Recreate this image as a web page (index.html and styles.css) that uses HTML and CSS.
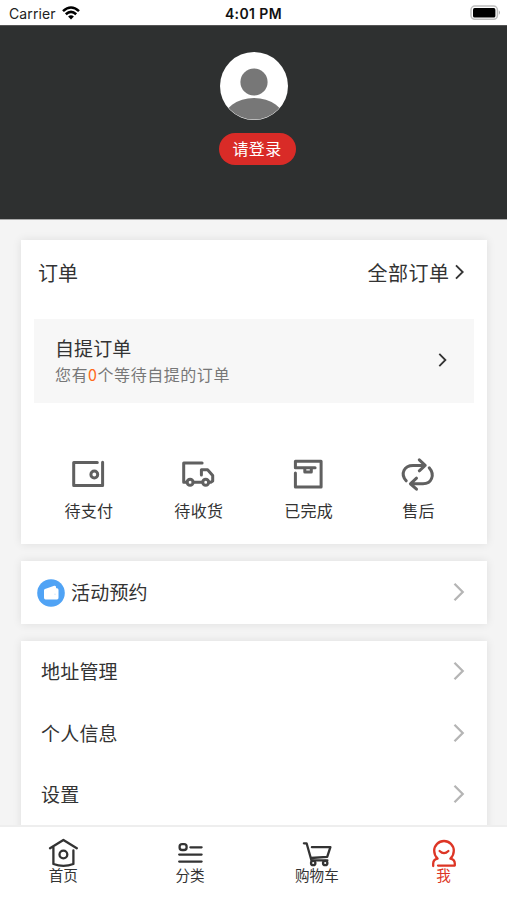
FILE: index.html
```html
<!DOCTYPE html>
<html lang="zh-CN">
<head>
<meta charset="utf-8">
<title>我的</title>
<link rel="stylesheet" href="styles.css">
</head>
<body>
<div class="app">
  <header class="status">
    <div class="carrier"><span>Carrier</span>
      <svg width="18" height="14" viewBox="0 0 18 14"><g fill="none" stroke="#000" stroke-width="2.6"><path d="M1 5.1Q9-2.1 17 5.1"/><path d="M3.8 8.2Q9 3.6 14.2 8.2"/></g><path d="M6.1 10.4Q9 8 11.9 10.4L9 13.4Z"/></svg>
    </div>
    <div class="time">4:01 PM</div>
    <div class="battery">
      <svg width="32" height="16" viewBox="0 0 32 16"><rect x="1" y="1.1" width="26.4" height="13.2" rx="3.8" fill="#fff" stroke="#bdbdbd" stroke-width="1.5"/><rect x="3" y="3.1" width="22.4" height="9.4" rx="1.6"/><path d="M28.9 5.6Q31 7.7 28.9 9.8Z" fill="#aaa"/></svg>
    </div>
  </header>

  <section class="profile">
    <svg class="avatar" width="68" height="68" viewBox="0 0 68 68"><defs><clipPath id="face"><circle cx="34" cy="34" r="33.6"/></clipPath></defs><circle cx="34" cy="34" r="34" fill="#fff"/><g fill="#777" clip-path="url(#face)"><circle cx="34" cy="30" r="13.6"/><ellipse cx="34" cy="69" rx="31" ry="23"/></g></svg>
    <button class="login">请登录</button>
  </section>

  <main class="content">
    <section class="card orders">
      <div class="orders-head">
        <h2>订单</h2>
        <div class="all"><span>全部订单</span><svg width="9" height="16" viewBox="0 0 9 16"><path d="M1 1.3L7.7 8L1 14.7" fill="none" stroke="#333" stroke-width="1.9"/></svg></div>
      </div>
      <div class="pickup">
        <div>
          <div class="pickup-title">自提订单</div>
          <div class="pickup-note">您有<b>0</b>个等待自提的订单</div>
        </div>
        <svg width="9" height="14" viewBox="0 0 9 14"><path d="M1.3 .8L7.4 7L1.3 13.2" fill="none" stroke="#333" stroke-width="1.8"/></svg>
      </div>
      <div class="states">
        <div class="state">
          <svg class="line" viewBox="0 0 40 40"><path d="M29.3 8.5H5.7V31.5H34.6V8.2"/><circle cx="26.3" cy="20.5" r="3.4"/></svg>
          <span>待支付</span>
        </div>
        <div class="state">
          <svg class="line" viewBox="0 0 40 40"><path d="M24.1 9H5.7V28.3H9M15.1 28.3H24.7M23.4 21V15.7H29.6L34.7 21.5V27L32.8 28.3H30.7"/><circle cx="12.1" cy="28.3" r="3"/><circle cx="27.7" cy="28.3" r="3"/></svg>
          <span>待收货</span>
        </div>
        <div class="state">
          <svg class="line" viewBox="0 0 40 40"><path d="M7.4 19V33H33.1V7.3H7.4V13.7H27.1M16.8 13.7V17.9H23.3V13.7"/></svg>
          <span>已完成</span>
        </div>
        <div class="state">
          <svg class="line" viewBox="0 0 40 40"><path d="M8.2 26.8C1.8 19.5 6.5 11.4 15 11.4H27M21.3 5.8L27.2 11.4L21.3 16.8M31.2 13.8C37.4 21 33.4 29.8 25 29.8H12.8M18.5 24.2L12.4 29.8L18.5 35.2"/></svg>
          <span>售后</span>
        </div>
      </div>
    </section>

    <section class="card booking">
      <svg width="28" height="28" viewBox="0 0 28 28"><circle cx="14" cy="14" r="13.8" fill="#50a3f5"/><path d="M7 11.2Q7 10.3 8 10L17.2 6.7Q18.6 6.4 18.9 7.6L19.2 9.3H20Q21.5 9.3 21.5 11V18.8Q21.5 20.4 20 20.4H8.5Q7 20.4 7 18.8Z" fill="#fff"/><circle cx="18" cy="15.3" r=".8" fill="#d4e9fd"/></svg>
      <span class="label">活动预约</span>
      <svg class="more" width="12" height="20" viewBox="0 0 12 20"><path d="M1.5 1.8L9.7 10L1.5 18.2"/></svg>
    </section>

    <section class="card menu">
      <div class="row"><span class="label">地址管理</span><svg class="more" width="12" height="20" viewBox="0 0 12 20"><path d="M1.5 1.8L9.7 10L1.5 18.2"/></svg></div>
      <div class="row"><span class="label">个人信息</span><svg class="more" width="12" height="20" viewBox="0 0 12 20"><path d="M1.5 1.8L9.7 10L1.5 18.2"/></svg></div>
      <div class="row"><span class="label">设置</span><svg class="more" width="12" height="20" viewBox="0 0 12 20"><path d="M1.5 1.8L9.7 10L1.5 18.2"/></svg></div>
    </section>
  </main>

  <nav class="tabs">
    <div class="tab">
      <svg viewBox="0 0 30 30"><path d="M2 10.2L15.4 2L28.8 10.2M5.4 9V26Q15.4 29.6 25.4 26V12.5"/><circle cx="15.4" cy="16.5" r="3.9"/></svg>
      <span>首页</span>
    </div>
    <div class="tab">
      <svg viewBox="0 0 30 30"><rect x="4.6" y="6.2" width="7" height="5.8" rx="2.6"/><path d="M15.4 9.3H26.6M4.2 16.6H26.6M4.2 23.6H26.6"/></svg>
      <span>分类</span>
    </div>
    <div class="tab">
      <svg viewBox="0 0 30 30"><path d="M1.9 5.3H4.6L9.4 22.3H25.4M9.9 9.2H28.4L25.2 18.9L8.8 20"/><circle cx="11.2" cy="25" r="2.2"/><circle cx="23.2" cy="25" r="2.2"/></svg>
      <span>购物车</span>
    </div>
    <div class="tab active">
      <svg viewBox="0 0 30 30"><path d="M4.2 28V25.5Q4.2 21.6 8.6 20.6Q5.2 17.4 5.2 12.8A9.8 9.8 0 0 1 24.8 12.8Q24.8 17.4 21.4 20.6Q25.8 21.6 25.8 25.5V27.6H9M10.6 13Q15 17.3 19.4 13"/></svg>
      <span>我</span>
    </div>
  </nav>
</div>
</body>
</html>
```
FILE: styles.css
```css
* { box-sizing: border-box; }
body { margin: 0; font-family: "Noto Sans CJK SC", sans-serif; color: #333; }
svg { display: block; flex: none; }
.app { width: 507px; height: 900px; overflow: hidden; display: flex; flex-direction: column; background: #f4f4f4; }

.status { height: 25px; flex: none; padding: 1px 6px 0 9px; background: #fff; display: grid; grid-template-columns: 1fr auto 1fr; align-items: center; font-family: Inter, sans-serif; font-size: 14px; color: #222; }
.carrier { display: flex; align-items: center; gap: 6px; letter-spacing: .1px; }
.time { margin-right: 3px; font-weight: 600; color: #111; letter-spacing: .4px; }
.battery { justify-self: end; margin-right: -1px; }

.profile { height: 195px; flex: none; padding-top: 27px; background: #2e3030; border-top: 1px solid #555; border-bottom: 1px solid #aaa; display: flex; flex-direction: column; align-items: center; }
.avatar { margin-top: -1px; }
.login { margin: 13px 0 0 7px; width: 77px; height: 32px; padding: 0 0 2px; border: 0; border-radius: 16px; background: #d92b27; color: #fff; font: 16px/30px "Noto Sans CJK SC", sans-serif; letter-spacing: .4px; }

.content { flex: 1; min-height: 0; overflow: hidden; padding: 20px 20.5px 0 21px; display: flex; flex-direction: column; gap: 17px; }
.card { background: #fff; flex: none; box-shadow: 0 0 9px rgba(0, 0, 0, .09); }
.orders { height: 304px; padding: 0 13px; }
.orders-head { height: 79px; padding: 0 10px 15px 4px; display: flex; align-items: center; justify-content: space-between; }
h2 { margin: 0; font-size: 20px; font-weight: 400; }
.all { display: flex; align-items: center; gap: 5px; font-size: 20px; letter-spacing: .5px; }
.pickup { height: 84px; padding: 0 26.5px 2px 21px; background: #f7f7f7; display: flex; align-items: center; justify-content: space-between; }
.pickup-title { font-size: 19px; line-height: 28px; letter-spacing: .1px; }
.pickup-note { font-size: 16px; line-height: 25px; letter-spacing: .55px; color: #777; }
.pickup-note b { font-weight: 400; color: #ff6a1c; }
.states { margin-top: 51px; display: grid; grid-template-columns: repeat(4, 1fr); }
.state { display: flex; flex-direction: column; align-items: center; gap: 3px; font-size: 16px; line-height: 26px; letter-spacing: .3px; }
.line { width: 40px; height: 40px; margin-left: -1px; fill: none; stroke: #606060; stroke-width: 3; stroke-linecap: round; stroke-linejoin: round; }

.booking { height: 63px; padding: 0 22px 0 16px; display: flex; align-items: center; gap: 6px; }
.label { flex: 1; padding-bottom: 2px; font-size: 19px; line-height: 28px; letter-spacing: .2px; }
.more { margin-top: -2px; fill: none; stroke: #b5b5b5; stroke-width: 2.3; }
.menu { height: 200px; }
.row { height: 61.7px; padding: 0 22px 0 20px; display: flex; align-items: center; }

.tabs { height: 75px; flex: none; border-top: 2px solid #eee; background: #fff; display: grid; grid-template-columns: repeat(4, 1fr); }
.tab { padding-top: 11px; display: flex; flex-direction: column; align-items: center; font-size: 14.6px; line-height: 20px; }
.tab svg { width: 30px; height: 30px; margin-bottom: -3px; fill: none; stroke: #333; stroke-width: 2.3; stroke-linecap: round; stroke-linejoin: round; }
.active { color: #dd3525; }
.active svg { stroke: #dd3525; }
```
